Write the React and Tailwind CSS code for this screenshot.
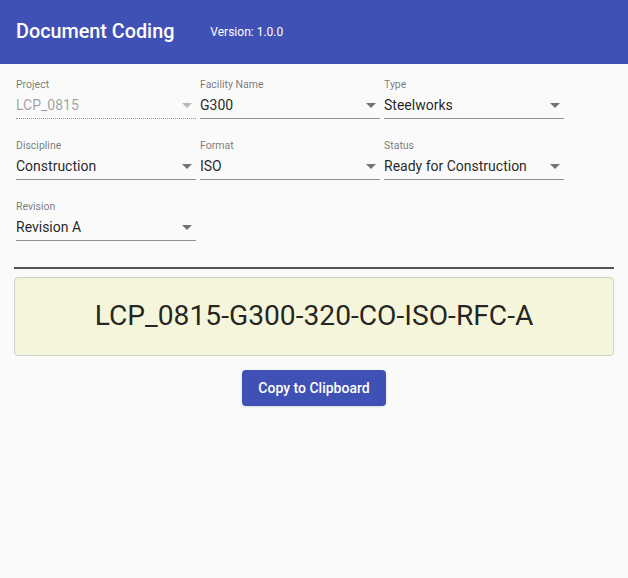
import React from 'react';

// Select-like field in the old Material look
const Field = ({ label, value, disabled }) => (
  <div className="w-[180px] flex flex-col">
    <div className="h-3 text-[10.5px] leading-3 text-[rgba(0,0,0,0.54)]">{label}</div>
    <div
      className={
        'mt-[1px] flex items-center h-[27px] ' +
        (disabled
          ? 'border-b border-dotted border-[rgba(0,0,0,0.42)]'
          : 'border-b border-[rgba(0,0,0,0.42)]')
      }
    >
      <span
        className={
          'flex-1 text-sm leading-[17px] ' +
          (disabled ? 'text-[rgba(0,0,0,0.38)]' : 'text-[rgba(0,0,0,0.87)]')
        }
      >
        {value}
      </span>
      <svg width="10" height="5" viewBox="0 0 10 5" className="mr-[4px]">
        <path d="M0 0l5 5 5-5z" fill={disabled ? 'rgba(0,0,0,0.26)' : 'rgba(0,0,0,0.54)'} />
      </svg>
    </div>
  </div>
);

const fields = [
  { label: 'Project', value: 'LCP_0815', disabled: true },
  { label: 'Facility Name', value: 'G300' },
  { label: 'Type', value: 'Steelworks' },
  { label: 'Discipline', value: 'Construction' },
  { label: 'Format', value: 'ISO' },
  { label: 'Status', value: 'Ready for Construction' },
  { label: 'Revision', value: 'Revision A' },
];

export default function App() {
  return (
    <div className="min-h-screen bg-[#fafafa] font-['Roboto',sans-serif]">
      {/* App bar */}
      <header className="h-16 bg-[#3f51b5] flex items-center px-4 text-white">
        <h1 className="text-[19.8px] font-medium">Document Coding</h1>
        <span className="ml-9 text-xs">Version: 1.0.0</span>
      </header>

      {/* Code part selectors */}
      <div className="px-4 pt-[15px] grid grid-cols-[180px_180px_180px] gap-x-1 gap-y-[21px]">
        {fields.map((f) => (
          <Field key={f.label} {...f} />
        ))}
      </div>

      <div className="mx-[14px] mt-[26px] h-[2px] bg-[#555]" />

      {/* Resulting document code */}
      <div className="mx-[14px] mt-[8px] h-[79px] flex items-center justify-center rounded bg-[#f5f5dc] border border-[#d0d0c8]">
        <span className="text-[28.2px] text-[rgba(0,0,0,0.87)]">LCP_0815-G300-320-CO-ISO-RFC-A</span>
      </div>

      <div className="flex justify-center mt-[14px]">
        <button className="h-9 px-4 rounded bg-[#3f51b5] text-white text-sm font-medium shadow-sm">
          Copy to Clipboard
        </button>
      </div>
    </div>
  );
}
